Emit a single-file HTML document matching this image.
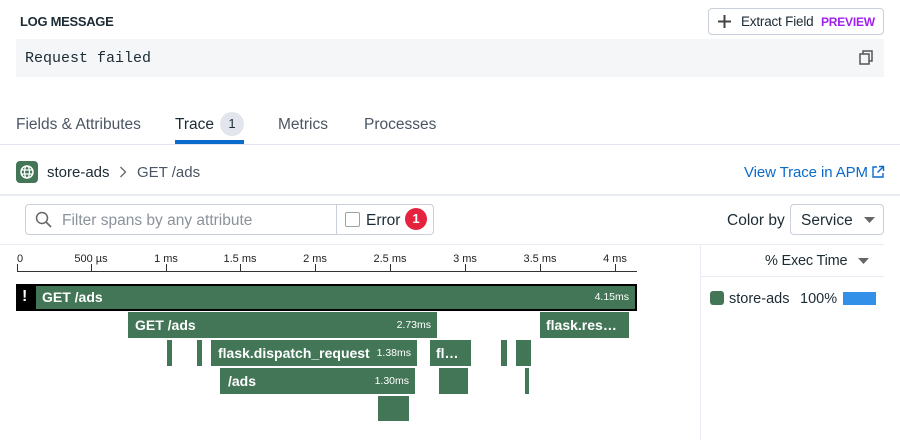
<!DOCTYPE html>
<html><head><meta charset="utf-8"><style>
*{margin:0;padding:0;box-sizing:border-box}
body{width:900px;height:440px;background:#fff;font-family:"Liberation Sans",sans-serif;color:#1c2b34;position:relative;overflow:hidden}
.a{position:absolute;white-space:nowrap}
.bar{position:absolute;background:#437657;color:#fff;font-weight:bold;font-size:14px;line-height:26px;overflow:hidden}
.bar .d{position:absolute;right:6px;font-size:10.5px;font-weight:normal}
.tick{position:absolute;top:264px;width:1px;height:8px;background:#333}
.tl{position:absolute;top:253px;font-size:11px;transform:translateX(-50%);color:#222}
</style></head><body>
<div class="a" style="left:20px;top:14px;font-size:13px;font-weight:bold;letter-spacing:-0.3px">LOG MESSAGE</div>
<div class="a" style="left:708px;top:8px;width:176px;height:27px;border:1px solid #c9cfdc;border-radius:4px;font-size:13.5px;line-height:25px;padding-left:32px;letter-spacing:-0.2px">Extract Field <span style="color:#a020f0;font-weight:bold;font-size:12px;margin-left:4px">PREVIEW</span>
<svg style="position:absolute;left:9px;top:6px" width="13" height="13"><path d="M6.5 0v13M0 6.5h13" stroke="#444" stroke-width="2"/></svg></div>
<div class="a" style="left:16px;top:39px;width:868px;height:38px;background:#f5f6f8"></div>
<div class="a" style="left:25px;top:50px;font-family:'Liberation Mono',monospace;font-size:15px">Request failed</div>
<svg class="a" style="left:859px;top:50px" width="14" height="15"><rect x="1" y="4" width="9" height="10" fill="none" stroke="#555" stroke-width="1.5"/><path d="M4 4V1h9v10h-3" fill="none" stroke="#555" stroke-width="1.5"/></svg>
<div class="a" style="left:16px;top:116px;font-size:15.5px;color:#4b5563">Fields &amp; Attributes</div>
<div class="a" style="left:175px;top:116px;font-size:15.5px;color:#1c2b34">Trace</div>
<div class="a" style="left:220px;top:112px;width:24px;height:24px;border-radius:12px;background:#e2e5ed;font-size:13px;text-align:center;line-height:24px">1</div>
<div class="a" style="left:278px;top:116px;font-size:15.5px;color:#4b5563">Metrics</div>
<div class="a" style="left:364px;top:116px;font-size:15.5px;color:#4b5563">Processes</div>
<div class="a" style="left:175px;top:140px;width:69px;height:4px;background:#0b6bcb"></div>
<div class="a" style="left:0;top:144px;width:900px;height:1px;background:#e2e5ed"></div>
<div class="a" style="left:16px;top:161px;width:22px;height:22px;border-radius:4px;background:#437657"></div>
<svg class="a" style="left:19px;top:164px" width="16" height="16"><circle cx="8" cy="8" r="6" fill="none" stroke="#fff" stroke-width="1.5"/><ellipse cx="8" cy="8" rx="2.5" ry="6" fill="none" stroke="#fff" stroke-width="1.3"/><path d="M2 6h12M2 10h12" stroke="#fff" stroke-width="1.2"/></svg>
<div class="a" style="left:47px;top:164px;font-size:15px">store-ads</div>
<svg class="a" style="left:119px;top:166px" width="8" height="12"><path d="M1.5 1l5 5-5 5" fill="none" stroke="#666" stroke-width="1.3"/></svg>
<div class="a" style="left:137px;top:164px;font-size:15px;color:#4b5563">GET /ads</div>
<div class="a" style="left:744px;top:164px;font-size:15px;color:#0b6bcb;letter-spacing:-0.1px">View Trace in APM</div>
<svg class="a" style="left:871px;top:165px" width="14" height="14"><path d="M6 2H2v10h10V8M8 1.5h4.5V6M12.5 1.5L6.5 7.5" fill="none" stroke="#0b6bcb" stroke-width="1.4"/></svg>
<div class="a" style="left:0;top:194px;width:900px;height:2px;background:#e8ebf1"></div>
<div class="a" style="left:25px;top:204px;width:409px;height:31px;border:1px solid #c9cfdc;border-radius:4px"></div>
<div class="a" style="left:336px;top:205px;width:1px;height:29px;background:#c9cfdc"></div>
<svg class="a" style="left:35px;top:211px" width="17" height="17"><circle cx="7" cy="7" r="5.5" fill="none" stroke="#666" stroke-width="1.5"/><path d="M11 11l5 5" stroke="#666" stroke-width="1.6"/></svg>
<div class="a" style="left:62px;top:212px;font-size:15.5px;color:#8a929a">Filter spans by any attribute</div>
<div class="a" style="left:345px;top:212px;width:15px;height:15px;border:1px solid #9aa3ae;border-radius:2px"></div>
<div class="a" style="left:366px;top:212px;font-size:15.5px">Error</div>
<div class="a" style="left:405px;top:208px;width:22px;height:22px;border-radius:11px;background:#e5233f;color:#fff;font-weight:bold;font-size:13px;text-align:center;line-height:22px">1</div>
<div class="a" style="left:727px;top:212px;font-size:15.5px">Color by</div>
<div class="a" style="left:790px;top:204px;width:94px;height:31px;border:1px solid #c9cfdc;border-radius:4px;font-size:15.5px;padding:7px 0 0 10px">Service</div>
<svg class="a" style="left:864px;top:217px" width="11" height="6"><path d="M0 0h11L5.5 6z" fill="#666"/></svg>
<div class="a" style="left:0;top:244px;width:884px;height:1px;background:#e8ebf1"></div>
<div class="a" style="left:700px;top:245px;width:1px;height:195px;background:#e8ebf1"></div>
<div class="a" style="left:17px;top:271px;width:620px;height:1px;background:#333"></div>
<div class="tick" style="left:17px"></div><div class="tl" style="left:20px">0</div>
<div class="tick" style="left:91px"></div><div class="tl" style="left:91px">500 µs</div>
<div class="tick" style="left:166px"></div><div class="tl" style="left:166px">1 ms</div>
<div class="tick" style="left:240px"></div><div class="tl" style="left:240px">1.5 ms</div>
<div class="tick" style="left:315px"></div><div class="tl" style="left:315px">2 ms</div>
<div class="tick" style="left:390px"></div><div class="tl" style="left:390px">2.5 ms</div>
<div class="tick" style="left:465px"></div><div class="tl" style="left:465px">3 ms</div>
<div class="tick" style="left:540px"></div><div class="tl" style="left:540px">3.5 ms</div>
<div class="tick" style="left:615px"></div><div class="tl" style="left:615px">4 ms</div>
<div class="a" style="left:16px;top:284px;width:621px;height:27px;background:#000"></div>
<div class="a" style="left:22px;top:288px;color:#fff;font-weight:bold;font-size:16px">!</div>
<div class="bar" style="left:36px;top:286px;width:599px;height:23px;line-height:23px;padding-left:6px">GET /ads<span class="d">4.15ms</span></div>
<div class="bar" style="left:128px;top:312px;width:309px;height:26px;padding-left:7px">GET /ads<span class="d">2.73ms</span></div>
<div class="bar" style="left:540px;top:312px;width:89px;height:26px;padding-left:6px">flask.res…</div>
<div class="bar" style="left:167px;top:340px;width:5px;height:26px"></div>
<div class="bar" style="left:197px;top:340px;width:5px;height:26px"></div>
<div class="bar" style="left:211px;top:340px;width:206px;height:26px;padding-left:7px">flask.dispatch_request<span class="d">1.38ms</span></div>
<div class="bar" style="left:430px;top:340px;width:41px;height:26px;padding-left:6px">fl…</div>
<div class="bar" style="left:501px;top:340px;width:6px;height:26px"></div>
<div class="bar" style="left:516px;top:340px;width:15px;height:26px"></div>
<div class="bar" style="left:220px;top:368px;width:195px;height:26px;padding-left:8px">/ads<span class="d">1.30ms</span></div>
<div class="bar" style="left:439px;top:368px;width:29px;height:26px"></div>
<div class="bar" style="left:525px;top:368px;width:4px;height:26px"></div>
<div class="bar" style="left:378px;top:396px;width:31px;height:25px"></div>
<div class="a" style="left:765px;top:253px;font-size:14.5px;letter-spacing:-0.2px">% Exec Time</div>
<svg class="a" style="left:858px;top:258px" width="11" height="6"><path d="M0 0h11L5.5 6z" fill="#666"/></svg>
<div class="a" style="left:701px;top:276px;width:183px;height:1px;background:#e8ebf1"></div>
<div class="a" style="left:710px;top:291px;width:14px;height:14px;border-radius:3px;background:#437657"></div>
<div class="a" style="left:729px;top:291px;font-size:14.5px">store-ads</div>
<div class="a" style="left:800px;top:291px;font-size:14.5px">100%</div>
<div class="a" style="left:843px;top:292px;width:33px;height:13px;background:#3290e8"></div>
</body></html>
